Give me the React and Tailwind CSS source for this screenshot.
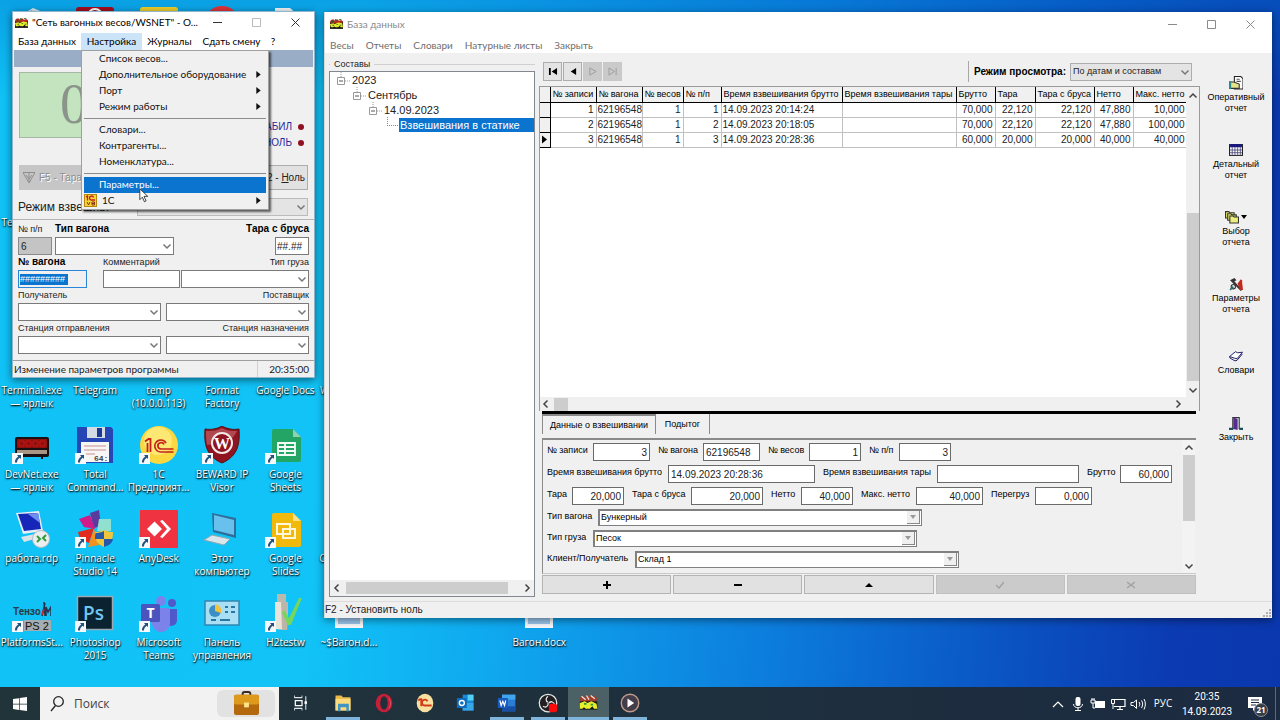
import React from "react";

const LABEL = "font-['Open_Sans','Noto_Sans',sans-serif]";
const UI = "font-[Lato,'Noto_Sans',sans-serif]";
const SANS = "font-['Liberation_Sans',Arial,sans-serif]";

/* ---------- small drawings ---------- */

function AppIcon({ className }) {
  return (
    <svg viewBox="0 0 16 12" className={`shrink-0 ${className}`} aria-hidden="true">
      <rect x="0" y="3" width="16" height="9" fill="#111" />
      <path d="M1 1l3-1 2 2 3-2 2 2 3-1 2 2-1 2H0z" fill="#b52a1c" />
      <path d="M6 0h2v2H6zM11 0h3v1h-3zM2 2h2v2H2z" fill="#1f5a2a" />
      <path d="M0 6l4-1 2 1 4-2 5 1 1 5h-3l-1-2-2 2H7L5 9 4 10H1z" fill="#e9e92c" />
      <path d="M3 7h2v1H3zM8 6h2v1H8zM12 7h2v1h-2z" fill="#1c7d2b" />
    </svg>
  );
}

function Chevron({ dir = "down", className = "" }) {
  const paths = {
    down: "M1.5 3.5 5 7l3.5-3.5",
    up: "M1.5 6.5 5 3l3.5 3.5",
    left: "M6.5 1.5 3 5l3.5 3.5",
    right: "M3.5 1.5 7 5 3.5 8.5",
  };
  return (
    <svg viewBox="0 0 10 10" className={`size-[10px] shrink-0 ${className}`} fill="none" stroke="currentColor" strokeWidth="1.5" aria-hidden="true">
      <path d={paths[dir]} />
    </svg>
  );
}

function Shortcut() {
  return (
    <svg viewBox="0 0 11 11" className="absolute -left-px bottom-0 size-[11px]" aria-hidden="true">
      <rect width="11" height="11" fill="#f6f9fc" />
      <path d="M5 2h4v4L7.7 4.8C6 6 5 7.500 5 9.500H3C2.700 7 4 5 6.300 3.400z" fill="#24507f" />
    </svg>
  );
}

const ART = {
  bin: <><path d="M10 8 20 2l12 5-3 28H12z" fill="#dfe8ee" /><path d="M13 7l6-3 3 5zM24 5l5 2-5 4z" fill="#9fb3c0" /></>,
  red: <><rect x="0" y="1" width="38" height="36" rx="3" fill="#a50d1c" /><path d="M12 10a7 7 0 0 1 14 0" fill="none" stroke="#fff" strokeWidth="2" /></>,
  yellow: <rect x="0" y="1" width="38" height="36" rx="3" fill="#f0cf2a" />,
  redball: <circle cx="19" cy="18" r="18" fill="#e0333a" />,
  doc: <path d="M9 2h15l7 6v28H9z" fill="#f4f6f8" />,
  devnet: (
    <>
      <rect x="2" y="11" width="34" height="20" rx="2" fill="#1a1012" />
      <rect x="4" y="13" width="30" height="9" fill="#8d0f10" />
      <path d="M6 15h5v5H6zM13 15h5v5h-5zM20 15h5v5h-5zM27 15h5v5h-5z" fill="none" stroke="#c5180f" />
      <rect x="4" y="24" width="30" height="4" fill="#a99583" />
      <path d="M28 31h2v2h-2z" fill="#111" />
    </>
  ),
  floppy: (
    <>
      <path d="M1 1h34l2 2v34H1z" fill="#2546b4" />
      <rect x="11" y="1" width="18" height="11" fill="#d5dbe2" />
      <rect x="21" y="2" width="5" height="9" fill="#1d3894" />
      <rect x="5" y="16" width="28" height="20" fill="#f6f6f4" />
      <path d="M8 20h22M8 24h22M8 28h11" stroke="#c98f90" />
      <text x="18" y="35" fontSize="8" fontWeight="bold" fill="#444" fontFamily="Liberation Mono">64:</text>
    </>
  ),
  onec: (
    <>
      <circle cx="19" cy="19" r="19" fill="#fbd83f" />
      <circle cx="18" cy="15" r="14" fill="#fdf08a" opacity=".7" />
      <path d="M5 15.500l3.500-2.500h2v13M7.500 17v9" fill="none" stroke="#c4201c" strokeWidth="1.800" />
      <path d="M26 17a6 6 0 1 0-5 9h12.500M24 18.500a3.200 3.200 0 1 0-3 4.500h12.500" fill="none" stroke="#c4201c" strokeWidth="1.700" />
    </>
  ),
  beward: (
    <>
      <path d="M19 0c5 3 11 4 17 3 1 15-1 27-17 34C3 30 1 18 2 3c6 1 12 0 17-3z" fill="#8f1420" stroke="#5a0c13" />
      <path d="M19 2c5 3 9 3 15 3-5 10-10 12-30 14C3 14 3 9 3 5c6 0 11 0 16-3z" fill="#c96a70" opacity=".6" />
      <circle cx="19" cy="17" r="10" fill="#8f1420" stroke="#f3e9e9" strokeWidth="2" />
      <text x="19" y="23" fontSize="16" fontWeight="bold" textAnchor="middle" fill="#fff" fontFamily="Liberation Serif">W</text>
    </>
  ),
  sheets: (
    <>
      <path d="M8 3h19l8 8v23a2 2 0 0 1-2 2H8a2 2 0 0 1-2-2V5a2 2 0 0 1 2-2z" fill="#23a566" />
      <path d="M27 3v8h8z" fill="#8ed1b1" />
      <path d="M12 17h17v12H12zM12 21h17M12 25h17M19 17v12" fill="none" stroke="#f3fbf6" strokeWidth="1.800" />
    </>
  ),
  rdp: (
    <>
      <path d="M3 3l23-2 4 20-20 3z" fill="#e7eef4" />
      <path d="M5 4l20-1 3 16-17 2z" fill="#1526b8" />
      <path d="M15 4l10-1 2 10z" fill="#6f8ff0" />
      <path d="M8 27l14-3 3 4-14 4z" fill="#dce3e8" />
      <circle cx="28" cy="29" r="8.500" fill="#eceff0" stroke="#b8c0c4" />
      <path d="M24 26l3 3-3 3M33 25l-3 3 3 3" fill="none" stroke="#2e9b3c" strokeWidth="2" />
    </>
  ),
  pinnacle: (
    <>
      <path d="M14 3l9-3 2 16-7 2z" fill="#5a3b9c" />
      <path d="M3 9l11-4 5 14-11-2z" fill="#d01c8b" />
      <path d="M23 9l12 0 0 12-14 0z" fill="#8fe0cf" />
      <path d="M2 22l16-4-5 15-9-4z" fill="#e22a1e" />
      <path d="M18 19l5 16-11 2z" fill="#f5921f" />
      <path d="M28 20c3 1.500 6 2 9 2 0 8-2 12-9 15-7-3-9-7-9-15 3 0 6-.5 9-2z" fill="#f2c63a" />
      <path d="M28 21v8h-9c0-2 0-4 .5-6 3 0 6-.5 8.500-2zM28 29h9c-1 4-3 6-9 8z" fill="#2657a8" />
    </>
  ),
  anydesk: (
    <>
      <rect width="38" height="38" fill="#ef3340" />
      <path d="M7 19l7.500-7.500L22 19l-7.500 7.500z" fill="#fff" />
      <path d="M20 11l2.500-1L31 19l-8.500 9-2.500-1 7-8z" fill="#fff" />
    </>
  ),
  computer: (
    <>
      <path d="M9 3l24 5v20L10 22z" fill="#2d6f9a" />
      <path d="M11 5l20 5v15l-20-5z" fill="#68c0ec" />
      <path d="M1 30l8-5 18 4-6 6z" fill="#d9e6ec" stroke="#8fa7b2" />
    </>
  ),
  slides: (
    <>
      <path d="M8 3h19l8 8v24a2 2 0 0 1-2 2H8a2 2 0 0 1-2-2V5a2 2 0 0 1 2-2z" fill="#f2b90d" />
      <path d="M27 3v8h8z" fill="#fae08a" />
      <path d="M11 14h13v10H11zM17 19h12v9H17z" fill="none" stroke="#fff6dc" strokeWidth="2" />
    </>
  ),
  tenzo: (
    <>
      <text x="0" y="21" fontSize="10" fontWeight="bold" fill="#2b3c48" fontFamily="Roboto">Тензо</text>
      <path d="M29 22l3-13M31 8l1 14M33 22v-9l2 5 3-5v9" stroke="#28324b" strokeWidth="1.500" fill="none" />
      <path d="M29 21l2-6" stroke="#c22" strokeWidth="1.500" />
      <rect x="11" y="26" width="27" height="11" fill="#a6adb0" />
      <text x="12" y="36" fontSize="11" fill="#111" fontFamily="Liberation Sans">PS 2</text>
    </>
  ),
  ps: (
    <>
      <rect x="1.500" y="2.500" width="35" height="33" fill="#0b2231" stroke="#9aa9b2" strokeWidth="1.500" />
      <text x="7" y="26" fontSize="19" fontWeight="600" fill="#6fc6ee" fontFamily="Open Sans">Ps</text>
    </>
  ),
  teams: (
    <>
      <circle cx="21" cy="7" r="5" fill="#7b83eb" />
      <circle cx="32" cy="9" r="4" fill="#5059c9" />
      <path d="M26 15h11v12a6 6 0 0 1-11 2z" fill="#5059c9" />
      <path d="M12 14h18v14a9 9 0 0 1-18 2z" fill="#7b83eb" />
      <rect x="1" y="10" width="19" height="18" rx="1.500" fill="#4b53bc" />
      <text x="10.500" y="24" fontSize="14" fontWeight="bold" textAnchor="middle" fill="#fff" fontFamily="Open Sans">T</text>
    </>
  ),
  panel: (
    <>
      <rect x="2" y="7" width="34" height="24" fill="#a9dff5" stroke="#2f86b0" strokeWidth="1.500" />
      <circle cx="12" cy="17" r="6" fill="#3b8fc4" />
      <path d="M12 17v-7a7 7 0 0 1 6 9z" fill="#f5c33b" />
      <path d="M22 13h3M28 13h4M22 18h3M28 18h4M8 26h5M17 26h10" stroke="#2777a5" strokeWidth="2" />
    </>
  ),
  usb: (
    <>
      <rect x="11" y="0" width="9" height="8" fill="#b9b9ae" />
      <path d="M9 8h13l-1 28-12-1z" fill="#e9e4da" />
      <path d="M15 8h7l-1 28h-5z" fill="#bdb5a8" />
      <path d="M18 16l5 8L33 4h3L25 31h-3l-6-12z" fill="#74d65a" />
    </>
  ),
  word: <><path d="M5 2h28v32H5z" fill="#f6f8fb" /><path d="M8 18h22v12H8z" fill="#9cc7ee" /></>,
};

function Glyph({ name, shortcut }) {
  return (
    <span className="relative block size-[38px]">
      <svg viewBox="0 0 38 38" className="size-full" aria-hidden="true">{ART[name]}</svg>
      {shortcut && <Shortcut />}
    </span>
  );
}

/* ---------- desktop icons ---------- */

const DESKTOP = [
  { c: "col-start-1 row-start-1", icon: "bin", t: [] },
  { c: "col-start-2 row-start-1", icon: "red", t: [] },
  { c: "col-start-3 row-start-1", icon: "yellow", t: [] },
  { c: "col-start-4 row-start-1", icon: "redball", t: [] },
  { c: "col-start-5 row-start-1", icon: "doc", t: [] },
  { c: "col-start-1 row-start-3", t: ["Terminal.exe"] },
  { c: "col-start-1 row-start-5", t: ["Terminal.exe", "— ярлык"] },
  { c: "col-start-2 row-start-5", t: ["Telegram"] },
  { c: "col-start-3 row-start-5", t: ["temp", "(10.0.0.113)"] },
  { c: "col-start-4 row-start-5", t: ["Format", "Factory"] },
  { c: "col-start-5 row-start-5", t: ["Google Docs"] },
  { c: "col-start-6 row-start-5", t: ["WinDjView 2"] },
  { c: "col-start-1 row-start-6", icon: "devnet", s: 1, t: ["DevNet.exe", "— ярлык"] },
  { c: "col-start-2 row-start-6", icon: "floppy", s: 1, t: ["Total", "Command..."] },
  { c: "col-start-3 row-start-6", icon: "onec", s: 1, t: ["1С", "Предприят..."] },
  { c: "col-start-4 row-start-6", icon: "beward", s: 1, t: ["BEWARD IP", "Visor"] },
  { c: "col-start-5 row-start-6", icon: "sheets", s: 1, t: ["Google", "Sheets"] },
  { c: "col-start-1 row-start-7", icon: "rdp", t: ["работа.rdp"] },
  { c: "col-start-2 row-start-7", icon: "pinnacle", s: 1, t: ["Pinnacle", "Studio 14"] },
  { c: "col-start-3 row-start-7", icon: "anydesk", s: 1, t: ["AnyDesk"] },
  { c: "col-start-4 row-start-7", icon: "computer", t: ["Этот", "компьютер"] },
  { c: "col-start-5 row-start-7", icon: "slides", s: 1, t: ["Google", "Slides"] },
  { c: "col-start-6 row-start-7", t: ["Семинары..."] },
  { c: "col-start-1 row-start-8", icon: "tenzo", s: 1, t: ["PlatformsSt..."] },
  { c: "col-start-2 row-start-8", icon: "ps", s: 1, t: ["Photoshop", "2015"] },
  { c: "col-start-3 row-start-8", icon: "teams", s: 1, t: ["Microsoft", "Teams"] },
  { c: "col-start-4 row-start-8", icon: "panel", t: ["Панель", "управления"] },
  { c: "col-start-5 row-start-8", icon: "usb", s: 1, t: ["H2testw"] },
  { c: "col-start-6 row-start-8", icon: "word", t: ["~$Вагон.d..."] },
  { c: "col-start-9 row-start-8", icon: "word", t: ["Вагон.docx"] },
];

function DesktopIcons() {
  return (
    <ul className="grid w-[571px] grid-cols-9 grid-rows-[repeat(8,84px)] pt-1">
      {DESKTOP.map((d, i) => (
        <li key={i} className={`${d.c} flex min-w-0 flex-col items-center gap-1 pt-0.5`}>
          {d.icon ? <Glyph name={d.icon} shortcut={d.s} /> : <span className="size-[38px]" />}
          <span className={`text-center text-[10px] leading-[13px] whitespace-nowrap text-white [text-shadow:0_1px_2px_#000,1px_1px_1px_#000a] ${LABEL}`}>
            {d.t.map((line) => <span key={line} className="block">{line}</span>)}
          </span>
        </li>
      ))}
    </ul>
  );
}

/* ---------- shared window parts ---------- */

function WindowButtons({ muted }) {
  const tone = muted ? "text-[#8a8a8a] pr-0.5" : "text-[#333]";
  return (
    <div className={`flex ${tone}`}>
      <button type="button" aria-label="Свернуть" className="grid w-[39px] place-items-center">
        <svg viewBox="0 0 9 9" className="size-[9px]" stroke="currentColor"><path d="M0 4.500h9" /></svg>
      </button>
      <button type="button" aria-label="Развернуть" className={`grid w-[39px] place-items-center ${muted ? "" : "text-[#bbb]"}`}>
        <svg viewBox="0 0 9 9" className="size-[9px]" stroke="currentColor" fill="none"><path d="M.5.5h8v8h-8z" /></svg>
      </button>
      <button type="button" aria-label="Закрыть" className="grid w-[39px] place-items-center">
        <svg viewBox="0 0 9 9" className="size-[9px]" stroke="currentColor"><path d="M.5.5l8 8M8.500.5l-8 8" /></svg>
      </button>
    </div>
  );
}

function Combo({ label, value = "", className = "", tone = "bg-white border-[#7a7a7a]" }) {
  return (
    <span className={`grid h-[18px] ${className}`}>
      <select aria-label={label} defaultValue={value} className={`col-start-1 row-start-1 w-full min-w-0 appearance-none border px-0.5 ${tone}`}>
        <option>{value}</option>
      </select>
      <Chevron className="pointer-events-none col-start-1 row-start-1 mr-0.5 self-center justify-self-end text-[#777]" />
    </span>
  );
}

/* ---------- scales window ---------- */

const MENU = [
  { t: "Список весов..." },
  { t: "Дополнительное оборудование", sub: 1 },
  { t: "Порт", sub: 1 },
  { t: "Режим работы", sub: 1 },
  null,
  { t: "Словари..." },
  { t: "Контрагенты..." },
  { t: "Номенклатура..." },
  null,
  { t: "Параметры...", on: 1 },
  { t: "1С", sub: 1, icon: 1 },
];

function DropMenu() {
  return (
    <div role="menu" className={`absolute top-full left-0 z-10 w-[188px] border border-[#a0a0a0] bg-[#f0f0f0] px-0.5 text-[#111] shadow-[2px_2px_2px_#0009] ${UI} text-[10px] leading-[14px]`}>
      {MENU.map((m, i) =>
        m === null ? (
          <div key={i} role="separator" className="flex h-[7px] items-center"><div className="h-px w-full bg-[#8c8c8c]" /></div>
        ) : (
          <button key={i} type="button" role="menuitem" className={`flex h-4 w-full items-center pr-[5px] pb-0.5 whitespace-nowrap ${m.on ? "bg-[#0a74cf] text-white" : ""}`}>
            <span className={`flex shrink-0 ${m.icon ? "w-[18px]" : "w-[15px]"}`}>
              {m.icon && (
                <svg viewBox="0 0 13 13" className="size-[13px] shrink-0" aria-hidden="true">
                  <rect x=".5" y=".5" width="12" height="12" fill="#f7d43c" stroke="#b8860b" />
                  <path d="M2 3l1.500-1v4.500M9.500 3.500A2 2 0 1 0 8 6h3" fill="none" stroke="#c21f17" strokeWidth="1.300" />
                  <path d="M3 8l1.500 3L6 8M8 8h2.500v3H8zM8 9.500h2" fill="none" stroke="#8a3a10" />
                </svg>
              )}
            </span>
            <span className="flex-1 text-left">{m.t}</span>
            {m.sub && <svg viewBox="0 0 5 8" className="h-[7px] w-[5px]" aria-hidden="true"><path d="M0 0l5 4-5 4z" fill="#111" /></svg>}
          </button>
        )
      )}
      <svg viewBox="0 0 12 18" className="absolute top-[137px] left-[57px] h-[15px] w-[10px]" aria-hidden="true">
        <path d="M1 1v13l3-3 2.500 5.500 2-1L6 10h4.500z" fill="#fff" stroke="#222" />
      </svg>
    </div>
  );
}

function Labelled({ text, bold, right, className = "", children }) {
  return (
    <label className={`flex min-w-0 flex-col ${className}`}>
      <span className={`h-[15px] leading-[14px] whitespace-nowrap ${bold ? "text-[10px] font-bold text-black" : "text-[9px]"} ${right ? "self-end" : ""}`}>{text}</span>
      {children}
    </label>
  );
}

function ScalesWindow() {
  const box = "h-[18px] min-w-0 border border-[#7a7a7a] bg-white px-1";
  return (
    <section className={`absolute top-[11px] left-3 flex w-[303px] flex-col border border-[#8fb6cc] bg-[#f0f0f0] shadow-[0_2px_8px_#0008] ${SANS} text-[10px] text-[#222]`}>
      <header className="flex h-[21px] items-stretch bg-white pl-0.5">
        <AppIcon className="h-[10px] w-[13px] self-center" />
        <h1 className={`flex-1 self-center pl-1 text-[10px] whitespace-nowrap text-black ${UI}`}>"Сеть вагонных весов/WSNET" - О...</h1>
        <WindowButtons />
      </header>
      <nav className={`flex h-[17px] items-center bg-white leading-4 whitespace-nowrap text-black ${UI}`}>
        <button type="button" className="w-[68px] pb-0.5">База данных</button>
        <div className="relative w-[61px]">
          <button type="button" className="h-[17px] w-full bg-[#cce4f7] pb-0.5">Настройка</button>
          <DropMenu />
        </div>
        <button type="button" className="w-[55px] pb-0.5">Журналы</button>
        <button type="button" className="w-[69px] pb-0.5">Сдать смену</button>
        <button type="button" className="w-[14px] pb-0.5">?</button>
      </nav>
      <div className="mx-px h-[17px] bg-[#99adc6]" />

      <div className="flex justify-between px-1.5 pt-[5px]">
        <output className="h-[66px] w-[210px] border border-[#a5b8a5] bg-[#c3e4bf] pl-10 font-['Liberation_Serif',serif] text-[56px] leading-[62px] text-[#8b948b]">0</output>
        <ul className="flex flex-col items-end gap-0.5 pt-[48px] pr-1 text-[10px] leading-[14px] text-[#2a2a9c]">
          {["СТАБИЛ", "НОЛЬ"].map((t) => (
            <li key={t} className="flex items-center gap-1.5 whitespace-nowrap">{t}<span className="size-1.5 rounded-full bg-[#8f1020]" /></li>
          ))}
        </ul>
      </div>
      <div className="mt-[15px] flex justify-between px-1.5">
        <button type="button" disabled className="flex h-[25px] w-[84px] items-center gap-1 bg-[#c6c6c6] px-1 text-[#8d8d8d] [text-shadow:1px_1px_0_#fff]">
          <svg viewBox="0 0 12 12" className="size-3" fill="none" stroke="#8d8d8d"><path d="M0 .5h12L6 11zM6 1v9M3 3l3 4 3-4" /></svg>
          F5 - Тара
        </button>
        <button type="button" className="h-[25px] w-[84px] border border-[#adadad] bg-[#e1e1e1] pr-0.5 text-right">F2 - <u>Н</u>оль</button>
      </div>
      <label className="mt-2 flex h-[17px] items-center justify-between pr-1.5 pl-[5px]">
        <span className="w-[119px] text-[12px] whitespace-nowrap">Режим взвешив.</span>
        <Combo label="Режим взвешивания" className="flex-1" tone="bg-[#e4e4e4] border-[#bbb]" />
      </label>
      <div className="mt-1 h-px bg-[#b5b5b5]" />

      <form className="flex flex-col px-[5px] pt-0.5 pb-1.5" onSubmit={(e) => e.preventDefault()}>
        <div className="flex gap-[3px]">
          <Labelled text="№ п/п" className="w-[34px]"><input readOnly value="6" className="h-[18px] min-w-0 border border-[#8a8a8a] bg-[#c4c4c4] px-0.5" /></Labelled>
          <Labelled text="Тип вагона" bold className="w-[119px]"><Combo label="Тип вагона" /></Labelled>
          <Labelled text="Тара с бруса" bold right className="flex-1"><input defaultValue="##.##" className={`${box} w-[34px] self-end px-px`} /></Labelled>
        </div>
        <div className="flex">
          <Labelled text="№ вагона" bold className="w-[85px]">
            <input defaultValue="#########" className="h-[18px] w-[69px] border border-[#2b86d9] bg-[linear-gradient(#0a74cf,#0a74cf)] bg-[length:48px_11px] bg-[position:1px_center] bg-no-repeat px-px text-[9px] text-white" />
          </Labelled>
          <Labelled text="Комментарий" className="w-[78px]"><input className={`${box} w-[77px]`} /></Labelled>
          <Labelled text="Тип груза" right className="flex-1"><Combo label="Тип груза" className="w-full" /></Labelled>
        </div>
        <div className="grid grid-cols-2 gap-x-[5px]">
          <Labelled text="Получатель"><Combo label="Получатель" /></Labelled>
          <Labelled text="Поставщик" right><Combo label="Поставщик" className="w-full" /></Labelled>
          <Labelled text="Станция отправления"><Combo label="Станция отправления" /></Labelled>
          <Labelled text="Станция назначения" right><Combo label="Станция назначения" className="w-full" /></Labelled>
        </div>
      </form>
      <footer className={`flex h-[17px] items-center justify-between border-t border-[#a0a0a0] pl-px leading-4 ${UI}`}>
        <span>Изменение параметров программы</span>
        <time className="border-l border-[#d0d0d0] pr-[5px] pl-[11px]">20:35:00</time>
      </footer>
    </section>
  );
}

/* ---------- database window ---------- */

function TreeRow({ text, pad, on, leaf }) {
  return (
    <li className={`flex h-[15px] items-center ${pad}`}>
      {leaf ? (
        <svg viewBox="0 0 14 15" className="h-[15px] w-[14px]" fill="none" stroke="#888" strokeDasharray="1 1"><path d="M2.500 0v8M2 8.500h11" /></svg>
      ) : (
        <svg viewBox="0 0 14 15" className="h-[15px] w-[14px]" fill="none" stroke="#999">
          <path d="M.5 5.500h7v7h-7z" /><path d="M2 9h4" stroke="#555" /><path d="M8 9h6M4 0v5" strokeDasharray="1 1" />
        </svg>
      )}
      <span className={`px-px text-[11px] leading-[14px] whitespace-nowrap ${on ? "flex-1 bg-[#0a74cf] text-white" : ""}`}>{text}</span>
    </li>
  );
}

const NAV = [
  { l: "Первая", d: "M0 0h2v8H0zM9 0v8L3 4z" },
  { l: "Предыдущая", d: "M8 0v8L2 4z" },
  { l: "Следующая", d: "M1 0l7 4-7 4z", off: 1 },
  { l: "Последняя", d: "M0 0l6 4-6 4zM8 0v8", off: 1 },
];

const COLS = [
  ["w-[46px]", "№ записи", "r"], ["w-[46px]", "№ вагона", "l"], ["w-[41px]", "№ весов", "r"], ["w-[38px]", "№ п/п", "r"],
  ["w-[121px]", "Время взвешивания брутто", "l"], ["w-[114px]", "Время взвешивания тары", "l"], ["w-[39px]", "Брутто", "r"],
  ["w-[40px]", "Тара", "r"], ["w-[59px]", "Тара с бруса", "r"], ["w-[39px]", "Нетто", "r"], ["w-[54px]", "Макс. нетто", "r"],
];

const ROWS = [
  ["1", "62196548", "1", "1", "14.09.2023 20:14:24", "", "70,000", "22,120", "22,120", "47,880", "10,000"],
  ["2", "62196548", "1", "2", "14.09.2023 20:18:05", "", "70,000", "22,120", "22,120", "47,880", "100,000"],
  ["3", "62196548", "1", "3", "14.09.2023 20:28:36", "", "60,000", "20,000", "20,000", "40,000", "40,000"],
];

function DataGrid() {
  return (
    <div className="flex min-h-0 flex-1 flex-col border border-b-0 border-[#9a9a9a] bg-white">
      <div className="flex min-h-0 flex-1">
        <div className="min-w-0 flex-1 overflow-hidden">
          <table className="w-[647px] table-fixed border-collapse">
            <thead>
              <tr className="h-[15px] bg-[#f0f0f0] text-left text-[9px] text-black">
                <th className="w-[10px] border-r border-b border-black" aria-label="Метка" />
                {COLS.map(([w, t]) => (
                  <th key={t} className={`${w} border-r border-b border-black p-0 pl-0.5 leading-[14px] font-normal whitespace-nowrap`}>{t}</th>
                ))}
              </tr>
            </thead>
            <tbody>
              {ROWS.map((r, i) => (
                <tr key={i} className="h-[15px]">
                  <th className="border-r border-b border-black bg-[#f0f0f0] p-0">
                    {i === 2 && <svg viewBox="0 0 5 8" className="ml-0.5 block h-[9px] w-[5px]"><path d="M0 0l5 4-5 4z" /></svg>}
                  </th>
                  {r.map((v, j) => (
                    <td key={j} className={`border-r border-b border-[#c0c0c0] py-0 pr-0.5 pl-px leading-[14px] whitespace-nowrap ${COLS[j][2] === "r" ? "text-right" : ""}`}>{v}</td>
                  ))}
                </tr>
              ))}
            </tbody>
          </table>
        </div>
        <div className="flex w-[13px] flex-col items-center bg-[#f0f0f0] pt-1 pb-0.5 text-[#444]">
          <Chevron dir="up" />
          <div className="flex-[112]" />
          <div className="w-3 flex-[168] bg-[#cdcdcd]" />
          <div className="h-1" />
          <Chevron dir="down" />
        </div>
      </div>
      <div className="flex h-[14px] items-center bg-[#f0f0f0] pr-4 pl-px text-[#444]">
        <Chevron dir="left" />
        <div className="ml-[3px] h-[13px] w-[14px] bg-[#cdcdcd]" />
        <div className="flex-1" />
        <Chevron dir="right" />
      </div>
    </div>
  );
}

const FIELD_ROWS = [
  [["№ записи", "w-[42px]", "3", "w-[57px]", 1], ["№ вагона", "w-[41px]", "62196548", "w-[57px]"], ["№ весов", "w-[37px]", "1", "w-[52px]", 1], ["№ п/п", "w-[26px]", "3", "w-[52px]", 1]],
  [["Время взвешивания брутто", "w-[117px]", "14.09.2023 20:28:36", "w-[147px]"], ["Время взвешивания тары", "w-[110px]", "", "w-[142px]"], ["Брутто", "w-[29px]", "60,000", "w-[52px]", 1]],
  [["Тара", "w-[21px]", "20,000", "w-[52px]", 1], ["Тара с бруса", "w-[55px]", "20,000", "w-[72px]", 1], ["Нетто", "w-[26px]", "40,000", "w-[52px]", 1], ["Макс. нетто", "w-[51px]", "40,000", "w-[67px]", 1], ["Перегруз", "w-[40px]", "0,000", "w-[57px]", 1]],
];

const LOOKUPS = [["Тип вагона", "w-[47px]", "Бункерный"], ["Тип груза", "w-[42px]", "Песок"], ["Клиент/Получатель", "w-[84px]", "Склад 1"]];

function Details() {
  return (
    <div className="flex h-[136px] border-t-2 border-b border-l border-[#8a8a8a] border-b-[#c8c8c8]">
      <form className="flex min-w-0 flex-1 flex-col gap-1 pt-[3px] pl-1" onSubmit={(e) => e.preventDefault()}>
        {FIELD_ROWS.map((row, i) => (
          <div key={i} className="flex gap-2">
            {row.map(([t, lw, v, w, r]) => (
              <label key={t} className="flex gap-1">
                <span className={`${lw} text-[9px] leading-[14px] whitespace-nowrap text-black`}>{t}</span>
                <input defaultValue={v} className={`${w} h-[18px] border border-[#6a6a6a] bg-white px-0.5 ${r ? "text-right" : ""}`} />
              </label>
            ))}
          </div>
        ))}
        {LOOKUPS.map(([t, lw, v]) => (
          <label key={t} className="flex gap-1">
            <span className={`${lw} text-[9px] leading-[14px] whitespace-nowrap text-black`}>{t}</span>
            <span className="grid h-[17px] w-[324px]">
              <select defaultValue={v} className="col-start-1 row-start-1 appearance-none border border-t-2 border-l-2 border-[#808080] bg-white px-px text-[9px] text-black"><option>{v}</option></select>
              <span className="pointer-events-none col-start-1 row-start-1 m-0.5 grid w-[13px] place-items-center justify-self-end border-r border-b border-[#888] bg-[#f0f0f0]">
                <svg viewBox="0 0 6 4" className="h-1 w-1.5"><path d="M0 0h6L3 4z" fill="#999" /></svg>
              </span>
            </span>
          </label>
        ))}
      </form>
      <div className="mr-px flex w-[13px] flex-col items-center bg-[#f3f3f3] pt-[3px] pb-0.5 text-[#444]">
        <Chevron dir="up" />
        <div className="mt-0.5 h-[66px] w-3 bg-[#cdcdcd]" />
        <div className="flex-1" />
        <Chevron dir="down" />
      </div>
    </div>
  );
}

const ACTIONS = [
  { l: "Добавить", a: <path d="M0 4h8M4 0v8" stroke="#000" strokeWidth="2" /> },
  { l: "Удалить", a: <path d="M0 4h8" stroke="#000" strokeWidth="2" /> },
  { l: "Изменить", a: <path d="M0 6l4-4 4 4z" fill="#000" /> },
  { l: "Сохранить", off: 1, a: <path d="M0 4l3 3 5-6" fill="none" stroke="#a4a4a4" strokeWidth="1.500" /> },
  { l: "Отменить", off: 1, a: <path d="M0 1l8 6M8 1L0 7" stroke="#a4a4a4" strokeWidth="1.500" /> },
];

const TOOLS = [
  {
    t: ["Оперативный", "отчет"],
    a: <><path d="M5 .5h6l2 2V12H5z" fill="#fff" stroke="#222" /><path d="M7 3h3M7 5h4" stroke="#555" /><path d="M.5 5.500h4l5 2v4h-9z" fill="#e4e48a" stroke="#333" /><path d="M0 5h2v7H0z" fill="#2d8a8a" /></>,
  },
  {
    t: ["Детальный", "отчет"],
    a: <><rect x=".5" y="1.500" width="12" height="10" fill="#fff" stroke="#222" /><rect x="1" y="1" width="11" height="3" fill="#17177e" /><path d="M3 4v7M5.500 4v7M8 4v7M10.500 4v7M1 6.500h11M1 9h11" stroke="#4a4a7a" strokeWidth=".8" /></>,
  },
  {
    t: ["Выбор", "отчета"],
    arrow: 1,
    a: <><path d="M.5 1.500h3l1 1h4v5h-8z" fill="#e3e36a" stroke="#333" /><path d="M2.500 3.500h3l1 1h4v5h-8z" fill="#e3e36a" stroke="#333" /><path d="M4.500 5.500h3l1 1h4v5.500h-8z" fill="#eeee80" stroke="#333" /></>,
  },
  {
    t: ["Параметры", "отчета"],
    a: <><path d="M1 3l4-2 2 2-2 1 7 8-1 1-8-8z" fill="#333" /><path d="M8 6l3-4 1 1 1 9h-3z" fill="#c2281c" /><circle cx="4" cy="9" r="2" fill="none" stroke="#333" /><path d="M1 12l3-3" stroke="#2a6a6a" strokeWidth="1.500" /></>,
  },
  {
    t: ["Словари"],
    a: <><path d="M.5 7l5.500-4.500 2 1L12.500 3l-5 6L5 8.500z" fill="#fff" stroke="#1d1d66" strokeWidth=".9" /><path d="M.5 7l.5 1.500 4.500 2.500 2-.5L12.500 4.500" fill="none" stroke="#1d1d66" strokeWidth=".9" /></>,
  },
  {
    t: ["Закрыть"],
    a: <><path d="M3.500 12V1.500h6V12" fill="#cfeaf2" stroke="#333" /><path d="M4 1l4 2v10l-4-1z" fill="#5a2a90" /><path d="M0 12h4M9.500 12h3.500" stroke="#1d4f5c" strokeWidth="2" /></>,
  },
];

function DatabaseWindow() {
  return (
    <section className={`absolute top-3 right-2 bottom-[69px] left-[324px] flex flex-col border-l border-[#d8d8d8] bg-[#f0f0f0] shadow-[0_2px_8px_#0007] ${SANS} text-[10px] text-[#222]`}>
      <header className="flex h-6 items-stretch bg-white pl-[5px]">
        <AppIcon className="h-[10px] w-[13px] self-center" />
        <h2 className={`flex-1 self-center pl-1 text-[10px] text-[#8a8a8a] ${UI}`}>База данных</h2>
        <WindowButtons muted />
      </header>
      <nav className={`flex h-[17px] items-center gap-3 bg-white pl-[5px] text-[10px] leading-4 whitespace-nowrap text-[#6d6d6d] ${UI}`}>
        {["Весы", "Отчеты", "Словари", "Натурные листы", "Закрыть"].map((t) => <button key={t} type="button">{t}</button>)}
      </nav>

      <div className="flex min-h-0 flex-1">
        <div className="flex w-[210px] flex-col pb-1 pl-1">
          <div className="flex h-[18px] items-center gap-1 pt-1 text-[9px] leading-[14px]">
            <span className="h-px w-px bg-[#c8c8c8]" />Составы<span className="h-px flex-1 bg-[#d0d0d0]" />
          </div>
          <div className="flex min-h-0 flex-1 flex-col border border-[#828790] bg-white">
            <ul className="flex-1">
              <TreeRow text="2023" pad="pl-[7px]" />
              <TreeRow text="Сентябрь" pad="pl-[23px]" />
              <TreeRow text="14.09.2023" pad="pl-[39px]" />
              <TreeRow text="Взвешивания в статике" pad="pl-[55px]" on leaf />
            </ul>
            <div className="flex h-4 items-center bg-[#f0f0f0] px-0.5 text-[#444]">
              <Chevron dir="left" />
              <div className="mx-1 h-3 flex-1"><div className="h-full w-[94%] bg-[#cdcdcd]" /></div>
              <Chevron dir="right" />
            </div>
          </div>
        </div>

        <div className="flex min-w-0 flex-1 flex-col pt-2 pl-1">
          <div className="flex h-[21px] items-center justify-between pr-2 pl-1">
            <div className="flex gap-px">
              {NAV.map((n) => (
                <button key={n.l} type="button" aria-label={n.l} disabled={!!n.off} className={`grid size-[19px] place-items-center border ${n.off ? "border-[#c8c8c8] bg-[#cacaca]" : "border-[#adadad] bg-[#e4e4e4]"}`}>
                  <svg viewBox="-1 -1 11 10" className="h-[9px] w-[10px]" fill={n.off ? "none" : "#000"} stroke={n.off ? "#999" : "none"}><path d={n.d} /></svg>
                </button>
              ))}
            </div>
            <label className="flex h-full items-center gap-1 border-l border-[#a8a8a8] pl-[5px]">
              <span className="text-[10px] font-bold whitespace-nowrap text-black">Режим просмотра:</span>
              <Combo label="Режим просмотра" value="По датам и составам" className="w-[122px] text-[9px]" tone="bg-[#e4e4e4] border-[#adadad]" />
            </label>
          </div>
          <div className="mt-1 flex min-h-0 flex-1 flex-col"><DataGrid /></div>
          <div className="pr-1 pl-[3px]">
            <div className="h-[3px] bg-black" />
            <div role="tablist" className="flex h-[24px] items-start text-[9px] leading-[18px] text-black">
              <button type="button" role="tab" aria-selected="true" className="h-5 w-[114px] border-t-2 border-r border-l border-[#8a8a8a] whitespace-nowrap">Данные о взвешивании</button>
              <button type="button" role="tab" aria-selected="false" className="h-5 w-[54px] border-r border-[#8a8a8a]">Подытог</button>
            </div>
            <Details />
            <div className="mt-px mb-[7px] grid grid-cols-5 gap-0.5">
              {ACTIONS.map((a) => (
                <button key={a.l} type="button" aria-label={a.l} disabled={!!a.off} className={`grid h-[19px] place-items-center border ${a.off ? "border-[#c0c0c0] bg-[#cbcbcb]" : "border-[#b4b4b4] bg-[#e1e1e1]"}`}>
                  <svg viewBox="0 0 8 8" className="size-2">{a.a}</svg>
                </button>
              ))}
            </div>
          </div>
        </div>

        <aside className="flex w-[72px] flex-col pt-[8px] text-[9px] text-black">
          {TOOLS.map((t) => (
            <button key={t.t[0]} type="button" className="flex h-[67px] flex-col items-center justify-center leading-[11px] whitespace-nowrap">
              <span className="mb-0.5 flex items-center gap-0.5">
                <svg viewBox="0 0 13 13" className="size-[14px]" aria-hidden="true">{t.a}</svg>
                {t.arrow && <svg viewBox="0 0 6 4" className="h-1 w-1.5"><path d="M0 0h6L3 4z" /></svg>}
              </span>
              {t.t.map((l) => <span key={l}>{l}</span>)}
            </button>
          ))}
        </aside>
      </div>

      <footer className="flex h-[17px] items-center justify-between border-t border-[#dcdcdc] leading-4">
        <span>F2 - Установить ноль</span>
        <svg viewBox="0 0 9 9" className="size-[9px] self-end" fill="#b0b0b0"><path d="M6 0h2v2H6zM6 3h2v2H6zM3 3h2v2H3zM6 6h2v2H6zM3 6h2v2H3zM0 6h2v2H0z" /></svg>
      </footer>
    </section>
  );
}

/* ---------- taskbar ---------- */

const TASKS = [
  { l: "Представление задач", a: <><path d="M3 5.500h9M3 18.500h9" stroke="#dfe5e8" strokeWidth="1.500" /><path d="M4 9h8v6H4z" fill="none" stroke="#fff" strokeWidth="1.500" /><path d="M16.500 4v16" stroke="#c5ced2" strokeWidth="1.500" /><path d="M15 10h3v3h-3z" fill="#fff" /><path d="M3 3v3M12 3v3M3 18v3M12 18v3" stroke="#dfe5e8" /></> },
  { l: "Проводник", u: 1, a: <><path d="M3 3h7l2 2h9v16H3z" fill="#eab94a" /><path d="M3 7h18v14H3z" fill="#fbdc7c" /><path d="M6 13h13v9h-3v-5H9v5H6z" fill="#3f94c4" /></> },
  { l: "Opera", a: <><ellipse cx="12" cy="12" rx="10" ry="11" fill="#c81f38" /><ellipse cx="12" cy="12" rx="4.500" ry="8" fill="#20303a" /><path d="M17 4a10 11 0 0 1 0 16c3-5 3-11 0-16z" fill="#e9667a" /></> },
  { l: "1С", a: <><ellipse cx="12" cy="12" rx="10" ry="11" fill="#f8e0a0" /><path d="M4 9l2-1.500h1.500V16M15 10a3.500 3.500 0 1 0-3 5h8" fill="none" stroke="#cf3a17" strokeWidth="2.200" /></> },
  { l: "Outlook", a: <><path d="M8 2h13v19H8z" fill="#1b8ad6" /><path d="M14 2h7v7h-7z" fill="#50d0f5" /><path d="M8 12l13 0v9H8z" fill="#38a7e8" /><rect x="1" y="6" width="12" height="12" fill="#0f6cbd" /><circle cx="7" cy="12" r="3" fill="none" stroke="#fff" strokeWidth="1.600" /></> },
  { l: "Word", u: 1, a: <><path d="M6 2h16v20H6z" fill="#2b7cd3" /><path d="M6 2h16v6H6z" fill="#41a5ee" /><path d="M6 16h16v6H6z" fill="#174ea6" /><rect x="1" y="6" width="12" height="12" fill="#185abd" /><path d="M3.500 9l1.500 6 2-5 2 5 1.500-6" fill="none" stroke="#fff" strokeWidth="1.400" /></> },
  { l: "OBS", u: 1, a: <><circle cx="12" cy="12" r="10.500" fill="#211f22" stroke="#e8e8e8" strokeWidth="1.500" /><path d="M12 11c-3-1-3-5 0-7M12 12c1 4-3 6-6 4M13 12c3-3 6-1 7 2" fill="none" stroke="#e8e8e8" strokeWidth="1.500" /><rect x="13" y="13" width="10" height="10" rx="3" fill="#fa0a0a" /></> },
  { l: "Весы", u: 1, on: 1, a: <><path d="M1 6l4-3 3 3 4-4 3 3 4-2 3 4-2 4H2z" fill="#a33c2c" /><path d="M3 4l5 4M14 3l5 4M9 3l3 5" stroke="#e5e7da" strokeWidth="1.500" /><path d="M1 10h21v10H1z" fill="#151a14" /><path d="M1 12l6-2 3 2 5-2 6 3 1 6h-4l-2-3-3 3H8l-2-2-2 2H1z" fill="#e8ee2c" /><path d="M6 12h3v2H6zM14 13h3v2h-3z" fill="#2d9c3a" /></> },
  { l: "Плеер", u: 1, a: <><circle cx="12" cy="12" r="10.500" fill="#433d4a" stroke="#c09a88" strokeWidth="1.700" /><path d="M9 6.500l8 5.500-8 5.500z" fill="#fff" /></> },
];

const TRAY = [
  { l: "Скрытые значки", a: <path d="M3 11l5-5 5 5" fill="none" stroke="#fff" strokeWidth="1.200" /> },
  { l: "Микрофон", a: <><rect x="5.500" y="1" width="5" height="9" rx="2" fill="#fff" /><path d="M3.500 8c0 5 9 5 9 0M8 12v3M5 14.500h6" fill="none" stroke="#fff" /></> },
  { l: "Питание", a: <><rect x="5" y="5" width="10" height="7" fill="#fff" /><path d="M1 4h4v3H1zM2 2v2M4 2v2M3 7v5h2" fill="none" stroke="#fff" /></> },
  { l: "Сеть", a: <><path d="M4 3.500h11v7H4M7 13.500h6M10 11v2" fill="none" stroke="#fff" strokeWidth="1.200" /><path d="M1.500 3.500h3v4h-3zM3 8v5" fill="none" stroke="#fff" /></> },
  { l: "Громкость", a: <path d="M1 6.500h2.500L6.500 4v8.500l-3-3H1zM9 6c1 1.500 1 3 0 4.500M11.500 4.500c1.500 2 1.500 5 0 7.500M14 3c1.800 3 1.800 7 0 10.500" fill="none" stroke="#fff" /> },
];

function Taskbar() {
  return (
    <footer className={`flex h-[33px] shrink-0 items-stretch bg-linear-to-r from-[#213439] to-[#1c2b41] text-white ${LABEL}`}>
      <button type="button" aria-label="Пуск" className="grid w-10 place-items-center">
        <svg viewBox="0 0 14 14" className="size-[14px]" fill="#fff"><path d="M0 2l6-.8v5.500H0zM6.700 1.100L14 0v6.700H6.700zM0 7.400h6V13l-6-.9zM6.700 7.400H14V14l-7.300-1z" /></svg>
      </button>
      <label className="mr-0.5 flex w-[239px] items-center bg-[#f2f2f2] pr-1 pl-2.5 text-[#444]">
        <svg viewBox="0 0 14 16" className="h-4 w-[14px] shrink-0" fill="none" stroke="#222" strokeWidth="1.300"><circle cx="8.500" cy="5.500" r="4.800" /><path d="M5.500 9.500L1 15" /></svg>
        <input type="search" placeholder="Поиск" className="min-w-0 flex-1 bg-transparent pl-2.5 text-[12px] placeholder:text-[#444]" />
        <span className="grid h-[27px] w-[58px] place-items-center rounded-md bg-[#e2e2e2]">
          <svg viewBox="0 0 26 26" className="size-[25px]" aria-hidden="true">
            <path d="M9 5V3a2 2 0 0 1 2-2h4a2 2 0 0 1 2 2v2" fill="none" stroke="#3a2a20" strokeWidth="2" />
            <rect y="4" width="26" height="21" rx="2" fill="#b4690e" /><rect y="4" width="26" height="10" rx="2" fill="#dd9a1c" />
            <rect x="10.500" y="12" width="5" height="5" fill="#ffe48a" />
          </svg>
        </span>
      </label>
      {TASKS.map((t) => (
        <button key={t.l} type="button" aria-label={t.l} className={`flex w-[41px] flex-col items-center justify-between ${t.on ? "bg-[#4b6166]" : ""}`}>
          <svg viewBox="0 0 24 24" className="mt-1.5 size-5" aria-hidden="true">{t.a}</svg>
          {t.u && <span className={`h-[3px] bg-[#7fb4dd] ${t.on ? "w-full" : "w-[34px]"}`} />}
        </button>
      ))}
      <div className="flex-1" />
      {TRAY.map((t) => (
        <button key={t.l} type="button" aria-label={t.l} className="grid w-5 place-items-center">
          <svg viewBox="0 0 16 16" className="size-4" aria-hidden="true">{t.a}</svg>
        </button>
      ))}
      <button type="button" className="w-[30px] text-[10px]">РУС</button>
      <time className="flex w-[58px] flex-col items-center justify-center font-[Roboto,sans-serif] text-[10px] leading-[15px]"><span>20:35</span><span>14.09.2023</span></time>
      <button type="button" aria-label="Уведомления" className="relative grid w-[37px] place-items-center">
        <svg viewBox="0 0 14 14" className="size-[14px]"><path d="M0 0h14v11H8l-3 3v-3H0z" fill="#fff" /><path d="M3 3h8M3 5.500h8M3 8h5" stroke="#1c2b41" /></svg>
        <span className="absolute right-[5px] bottom-[3px] grid size-[14px] place-items-center rounded-full border border-[#8a9098] bg-[#343c46] text-[8px] font-bold">21</span>
      </button>
      <span className="mr-1 ml-0.5 w-px bg-[#5a6a80]" />
    </footer>
  );
}

export default function App() {
  return (
    <div className={`flex h-screen flex-col overflow-hidden ${UI}`}>
      <main className="relative min-h-0 flex-1 bg-[linear-gradient(180deg,#0070cc66_0%,transparent_14%),linear-gradient(95deg,#10c2f6_0%,#11c3f7_27%,#0fa6ee_42%,#0c7cdc_62%,#0a52c2_80%,#0b3ab2_92%,#0a37ad_100%)]">
        <DesktopIcons />
        <ScalesWindow />
        <DatabaseWindow />
      </main>
      <Taskbar />
    </div>
  );
}
